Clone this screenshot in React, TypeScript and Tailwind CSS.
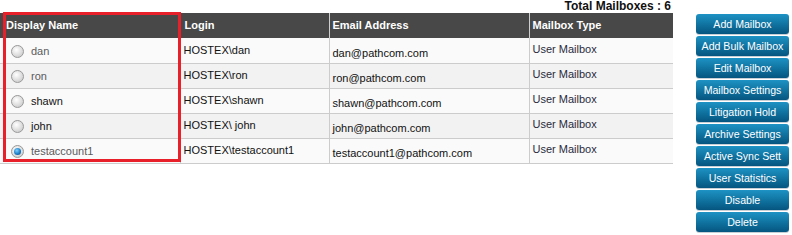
import React from "react"

type Row = { name: string; login: string; email: string; type: string; dim: boolean; checked?: boolean }

const rows: Row[] = [
  { name: "dan", login: "HOSTEX\\dan", email: "dan@pathcom.com", type: "User Mailbox", dim: true },
  { name: "ron", login: "HOSTEX\\ron", email: "ron@pathcom.com", type: "User Mailbox", dim: true },
  { name: "shawn", login: "HOSTEX\\shawn", email: "shawn@pathcom.com", type: "User Mailbox", dim: false },
  { name: "john", login: "HOSTEX\\ john", email: "john@pathcom.com", type: "User Mailbox", dim: false },
  { name: "testaccount1", login: "HOSTEX\\testaccount1", email: "testaccount1@pathcom.com", type: "User Mailbox", dim: true, checked: true },
]

// label as it is visible on the button (the long one gets cut by the button width)
const actions = [
  "Add Mailbox",
  "Add Bulk Mailbox",
  "Edit Mailbox",
  "Mailbox Settings",
  "Litigation Hold",
  "Archive Settings",
  "Active Sync Sett",
  "User Statistics",
  "Disable",
  "Delete",
]

function Radio({ checked }: { checked?: boolean }) {
  return (
    <span className="w-[13px] h-[13px] rounded-full border border-[#9a9a9a] bg-[radial-gradient(circle_at_40%_35%,#ffffff,#d4d4d4_70%,#bdbdbd)] flex items-center justify-center shrink-0">
      {checked && (
        <span className="w-[7px] h-[7px] rounded-full bg-[radial-gradient(circle_at_40%_35%,#7fd0ff,#1377c2_60%,#0a3f78)]" />
      )}
    </span>
  )
}

export default function App() {
  return (
    <div className="w-[792px] h-[235px] bg-white flex font-['Liberation_Sans',Arial,sans-serif] text-[11px] text-[#111]">
      {/* Mailbox list */}
      <div className="w-[673px] shrink-0">
        <div className="h-[13px] pr-[2px] text-right text-[12px] font-bold leading-[13px] text-[#111]">
          Total Mailboxes : 6
        </div>
        <div className="relative">
          <table className="w-[673px] border-collapse table-fixed">
            <colgroup>
              <col className="w-[180px]" />
              <col className="w-[149px]" />
              <col className="w-[200px]" />
              <col className="w-[144px]" />
            </colgroup>
            <thead>
              <tr className="h-[25px] bg-[#484848] text-white font-bold text-left">
                <th className="px-[6px] border-r border-[#cfcfcf]">Display Name</th>
                <th className="px-[4px] border-r border-[#cfcfcf]">Login</th>
                <th className="px-[3px] border-r border-[#cfcfcf]">Email Address</th>
                <th className="px-[3px]">Mailbox Type</th>
              </tr>
            </thead>
            <tbody>
              {rows.map((r, i) => (
                <tr
                  key={r.name}
                  className={`h-[25px] border-b border-[#cccccc] ${i % 2 === 1 ? "bg-[#f2f2f2]" : "bg-[#fafafa]"}`}
                >
                  <td className="px-[11px] border-r border-[#cccccc]">
                    <div className="flex items-center gap-[7px] pt-[2px]">
                      <Radio checked={r.checked} />
                      <span className={r.dim ? "text-[#5a5a5c]" : "text-[#111]"}>{r.name}</span>
                    </div>
                  </td>
                  <td className="px-[3px] border-r border-[#cccccc] whitespace-nowrap">
                    <div className="pb-[1px]">{r.login}</div>
                  </td>
                  <td className="px-[3px] border-r border-[#cccccc] whitespace-nowrap">
                    <div className="pt-[5px]">{r.email}</div>
                  </td>
                  <td className="px-[3px] text-[#2a2a3a]">
                    <div className="pb-[2px]">{r.type}</div>
                  </td>
                </tr>
              ))}
            </tbody>
          </table>
          {/* highlight around the Display Name column */}
          <div className="absolute left-[3px] top-[-1px] w-[178px] h-[150px] border-[3px] border-[#e8202a] pointer-events-none" />
        </div>
      </div>

      {/* Actions */}
      <div className="ml-[23px] pt-[14px] flex flex-col gap-[2px]">
        {actions.map((a) => (
          <button
            key={a}
            className="w-[93px] h-[20px] rounded-[3px] bg-gradient-to-b from-[#1d93c4] to-[#055680] text-white text-[10.6px] leading-[20px] text-center whitespace-nowrap overflow-hidden px-[3px] shadow-[0_1px_0_#c8d0d6]"
          >
            {a}
          </button>
        ))}
      </div>
    </div>
  )
}
